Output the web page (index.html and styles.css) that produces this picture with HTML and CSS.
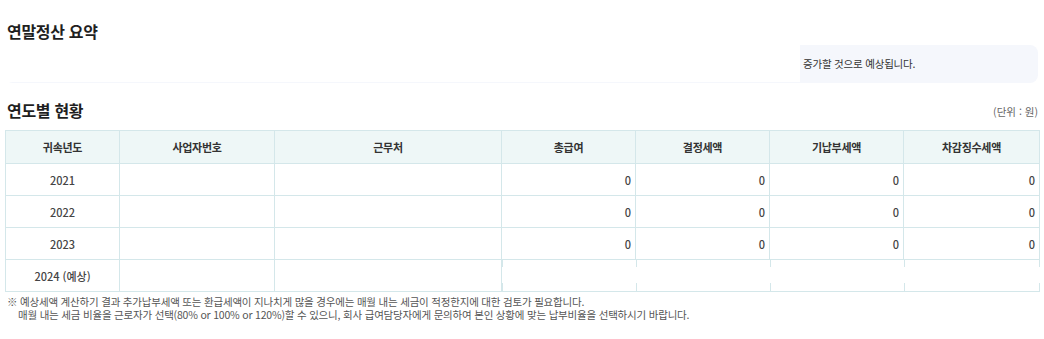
FILE: index.html
```html
<!DOCTYPE html>
<html lang="ko">
<head>
<meta charset="utf-8">
<link rel="stylesheet" href="styles.css">
</head>
<body>
<div class="page">
  <h2 class="title title-summary">연말정산 요약</h2>
  <div class="summary-box">
    <div class="summary-blank"></div>
    <div class="summary-text">증가할 것으로 예상됩니다.</div>
  </div>

  <div class="section-head">
    <h2 class="title title-year">연도별 현황</h2>
    <span class="unit">(단위 : 원)</span>
  </div>

  <table class="grid">
    <colgroup>
      <col class="c1"><col class="c2"><col class="c3"><col class="c4"><col class="c5"><col class="c6"><col class="c7">
    </colgroup>
    <thead>
      <tr>
        <th>귀속년도</th><th>사업자번호</th><th>근무처</th><th>총급여</th><th>결정세액</th><th>기납부세액</th><th>차감징수세액</th>
      </tr>
    </thead>
    <tbody>
      <tr><td class="year">2021</td><td></td><td></td><td class="num">0</td><td class="num">0</td><td class="num">0</td><td class="num">0</td></tr>
      <tr><td class="year">2022</td><td></td><td></td><td class="num">0</td><td class="num">0</td><td class="num">0</td><td class="num">0</td></tr>
      <tr><td class="year">2023</td><td></td><td></td><td class="num">0</td><td class="num">0</td><td class="num">0</td><td class="num">0</td></tr>
      <tr class="est">
        <td class="year">2024 (예상)</td><td></td><td></td>
        <td class="est-span" colspan="4">
          <div class="ticks">
            <span class="tick"></span><span class="tick"></span><span class="tick"></span><span class="tick tick-last"></span>
          </div>
        </td>
      </tr>
    </tbody>
  </table>

  <div class="note">
    <p class="note-line">※ 예상세액 계산하기 결과 추가납부세액 또는 환급세액이 지나치게 많을 경우에는 매월 내는 세금이 적정한지에 대한 검토가 필요합니다.</p>
    <p class="note-line note-indent">매월 내는 세금 비율을 근로자가 선택(80% or 100% or 120%)할 수 있으니, 회사 급여담당자에게 문의하여 본인 상황에 맞는 납부비율을 선택하시기 바랍니다.</p>
  </div>
</div>
</body>
</html>
```

FILE: styles.css
```css
* { box-sizing: border-box; }
html, body { margin: 0; padding: 0; background: #fff; }
body {
  font-family: "Noto Sans CJK KR", "Noto Sans", sans-serif;
  color: #222;
}
.page {
  padding: 0 6px 0 5px;
}
.title {
  margin: 0;
  font-weight: 700;
  color: #1f1f1f;
  letter-spacing: -0.3px;
}
.title-summary {
  font-size: 16px;
  line-height: 20px;
  padding-top: 21px;
  padding-left: 2px;
}
.summary-box {
  margin-top: 4px;
  height: 38px;
  display: flex;
  background: #f5f7fc;
  border-radius: 8px;
}
.summary-blank {
  width: 795px;
  height: 37px;
  background: #fff;
  border-radius: 6px 0 0 0;
}
.summary-text {
  font-size: 10.5px;
  color: #333;
  line-height: 38px;
  padding-left: 3px;
  letter-spacing: -0.2px;
}
.section-head {
  display: flex;
  justify-content: space-between;
  align-items: flex-end;
  margin-top: 16px;
  padding-left: 2px;
}
.title-year {
  font-size: 16px;
  line-height: 22px;
}
.unit {
  font-size: 10.5px;
  color: #666;
  line-height: 16px;
  padding-bottom: 1px;
}
.grid {
  margin-top: 9px;
  width: 1034px;
  border-collapse: collapse;
  table-layout: fixed;
  font-size: 10.5px;
}
.c1 { width: 114px; }
.c2 { width: 155px; }
.c3 { width: 227px; }
.c4 { width: 134px; }
.c5 { width: 134px; }
.c6 { width: 134px; }
.c7 { width: 136px; }
.grid th, .grid td {
  border: 1px solid #d4e7ea;
  padding: 0 5px;
}
.grid th {
  height: 33px;
  background: #eef7f7;
  font-weight: 700;
  color: #333;
  font-size: 11px;
  letter-spacing: -0.3px;
}
.grid td {
  height: 32px;
  color: #444;
}
.grid .year {
  text-align: center;
  font-size: 11px;
  font-weight: 500;
}
.grid .num {
  text-align: right;
  padding-right: 4px;
  font-weight: 500;
  font-size: 11px;
}
.grid .est-span {
  border-left: none;
  border-right: none;
  padding: 0;
}
.ticks {
  display: grid;
  grid-template-columns: 134px 134px 134px 1fr;
  height: 31px;
}
.tick {
  background-image:
    linear-gradient(#d4e7ea, #d4e7ea),
    linear-gradient(#d4e7ea, #d4e7ea);
  background-size: 1px 7px, 1px 8px;
  background-position: left top, left bottom;
  background-repeat: no-repeat;
}
.tick-last {
  background-image:
    linear-gradient(#d4e7ea, #d4e7ea),
    linear-gradient(#d4e7ea, #d4e7ea),
    linear-gradient(#d4e7ea, #d4e7ea),
    linear-gradient(#d4e7ea, #d4e7ea);
  background-size: 1px 7px, 1px 8px, 1px 7px, 1px 8px;
  background-position: left top, left bottom, right top, right bottom;
}
.note {
  margin-top: 3px;
  padding-left: 2px;
}
.note-line {
  margin: 0;
  font-size: 10.5px;
  line-height: 13px;
  color: #555;
  letter-spacing: -0.2px;
}
.note-indent {
  padding-left: 11px;
}
```
